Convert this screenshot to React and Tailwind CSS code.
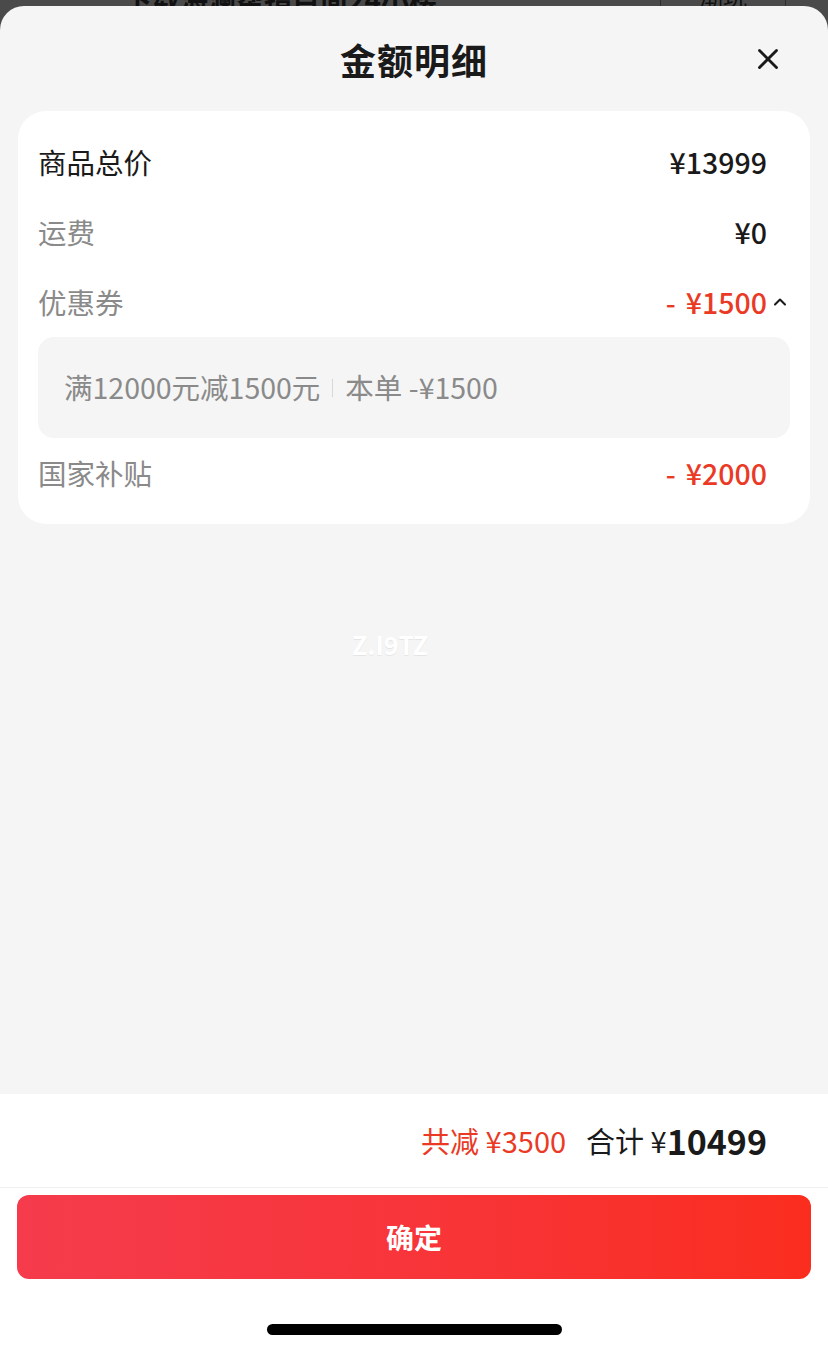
import { X, ChevronUp } from "lucide-react";

const font = { fontFamily: '"Noto Sans CJK SC", "Noto Sans", sans-serif' };

// one line in the price card
const Row = ({ label, value, strong, red, children }) => (
  <div className="h-[70px] flex items-center justify-between">
    <span className={`text-[28.5px] ${strong ? "text-[#1a1a1a]" : "text-[#8a8a8a]"}`}>{label}</span>
    <div className="flex items-center">
      {red && <span className="text-[28px] font-medium text-[#ea3a26] mr-[10px]">-</span>}
      <span className={`text-[28.5px] font-medium ${red ? "text-[#ea3a26]" : "text-[#1a1a1a]"}`}>{value}</span>
      {children ? children : <span className="w-[23px]" />}
    </div>
  </div>
);

const App = () => {
  return (
    <div className="w-[828px] h-[1352px] bg-[#4a4a4a] flex flex-col overflow-hidden" style={font}>
      {/* page behind the sheet */}
      <div className="h-[6px] relative overflow-hidden">
        <div className="absolute left-[124px] top-[-22px] text-[28px] font-bold text-[#111] whitespace-nowrap">
          下载海澜帮指目面24小楼
        </div>
        <div className="absolute left-[660px] top-0 w-[126px] h-[6px] border-x border-[#2e2e2e] flex justify-center">
          <span className="mt-[-22px] text-[24px] text-[#111]">潮玩</span>
        </div>
      </div>

      <div className="flex-1 bg-[#f5f5f5] rounded-t-[24px] flex flex-col">
        {/* header */}
        <div className="h-[105px] relative flex items-center justify-center">
          <h1 className="text-[36px] font-bold text-[#1a1a1a] tracking-[1px]">金额明细</h1>
          <button className="absolute right-[43px] top-[36px] text-[#1a1a1a]">
            <X size={34} strokeWidth={2} />
          </button>
        </div>

        {/* card */}
        <div className="mx-[18px] bg-white rounded-[28px] px-[20px] py-[16px]">
          <Row label="商品总价" value="¥13999" strong />
          <Row label="运费" value="¥0" />
          <Row label="优惠券" value="¥1500" red>
            <ChevronUp size={20} strokeWidth={2.5} className="ml-[3px] text-[#1a1a1a]" />
          </Row>
          <div className="h-[101px] rounded-[16px] bg-[#f5f5f5] flex items-center px-[26px] text-[28.5px] text-[#8a8a8a]">
            <span>满12000元减1500元</span>
            <span className="mx-[12px] w-px h-[18px] bg-[#d8d8d8]" />
            <span>本单 -¥1500</span>
          </div>
          <Row label="国家补贴" value="¥2000" red />
        </div>

        {/* watermark */}
        <div className="flex-1 relative">
          <span
            className="absolute left-[352px] top-[102px] text-[25px] font-semibold text-white"
            style={{ textShadow: "0 1px 1px rgba(0,0,0,0.07)" }}
          >
            Z.I9TZ
          </span>
        </div>

        {/* footer */}
        <div className="bg-white h-[258px] flex flex-col">
          <div className="h-[94px] flex items-center justify-end pr-[61px] border-b border-[#f0f0f0]">
            <span className="text-[29px] text-[#ea3a26]">共减 ¥3500</span>
            <span className="ml-[20px] text-[29px] text-[#1a1a1a]">合计 ¥</span>
            <span className="text-[34px] font-semibold text-[#1a1a1a] leading-none">10499</span>
          </div>
          <button className="mt-[7px] mx-[17px] h-[84px] rounded-[12px] bg-gradient-to-r from-[#f53b4c] to-[#fa2d1e] text-white text-[28px] font-semibold">
            确定
          </button>
          <div className="flex-1 flex justify-center items-end pb-[17px]">
            <div className="w-[295px] h-[11px] rounded-full bg-black" />
          </div>
        </div>
      </div>
    </div>
  );
};

export default App;
